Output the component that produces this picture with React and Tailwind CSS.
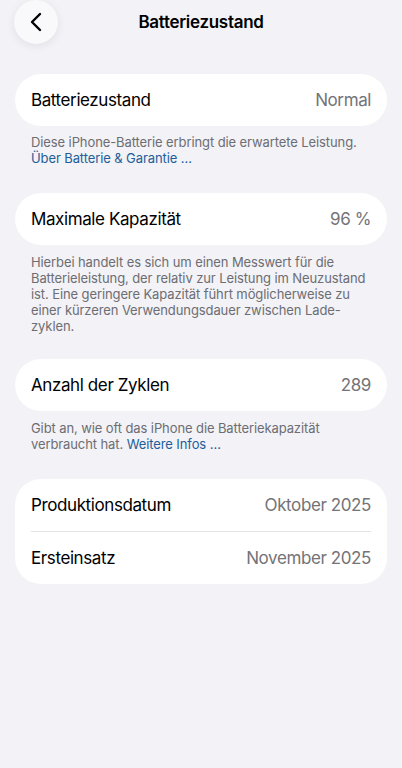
import React from "react";

const Row = ({ label, value }) => (
  <div className="flex h-[52px] items-center justify-between px-4 pt-[2px]">
    <span className="text-[17px] tracking-[-0.4px] text-black">{label}</span>
    <span className="text-[17px] tracking-[-0.4px] text-[#737378]">{value}</span>
  </div>
);

const Card = ({ children }) => (
  <div className="mx-[15px] overflow-hidden rounded-[26px] bg-white">{children}</div>
);

const Note = ({ children, className = "" }) => (
  <p
    className={`mx-[31px] whitespace-nowrap text-[13px] leading-[16px] tracking-[-0.1px] text-[#6d6d72] ${className}`}
  >
    {children}
  </p>
);

export default function App() {
  return (
    <div
      className="min-h-[768px] w-full bg-[#f2f2f7]"
      style={{ fontFamily: "Inter, 'Noto Sans', sans-serif" }}
    >
      {/* header */}
      <div className="relative flex h-[44px] items-center justify-center">
        <button className="absolute left-[14px] top-0 flex h-[44px] w-[44px] items-center justify-center rounded-full bg-[#f9f9fb] shadow-[0_2px_10px_rgba(0,0,0,0.08)]">
          <svg width="12" height="20" viewBox="0 0 12 20" fill="none">
            <path
              d="M10 2 L2 10 L10 18"
              stroke="#000"
              strokeWidth="2.4"
              strokeLinecap="round"
              strokeLinejoin="round"
            />
          </svg>
        </button>
        <h1 className="pt-[2px] text-[17px] font-semibold tracking-[-0.3px] text-black">
          Batteriezustand
        </h1>
      </div>

      <div className="mt-[30px]">
        <Card>
          <Row label="Batteriezustand" value="Normal" />
        </Card>
        <Note className="mb-[27px] mt-[8px]">
          Diese iPhone-Batterie erbringt die erwartete Leistung.
          <br />
          <span className="text-[#235e99]">Über Batterie &amp; Garantie …</span>
        </Note>

        <Card>
          <Row label="Maximale Kapazität" value="96 %" />
        </Card>
        <Note className="mb-[25px] mt-[9px]">
          Hierbei handelt es sich um einen Messwert für die
          <br />
          Batterieleistung, der relativ zur Leistung im Neuzustand
          <br />
          ist. Eine geringere Kapazität führt möglicherweise zu
          <br />
          einer kürzeren Verwendungsdauer zwischen Lade-
          <br />
          zyklen.
        </Note>

        <Card>
          <Row label="Anzahl der Zyklen" value="289" />
        </Card>
        <Note className="mb-[27px] mt-[9px]">
          Gibt an, wie oft das iPhone die Batteriekapazität
          <br />
          verbraucht hat. <span className="text-[#235e99]">Weitere Infos …</span>
        </Note>

        <Card>
          <Row label="Produktionsdatum" value="Oktober 2025" />
          <div className="mx-4 h-px bg-[#e3e3e8]" />
          <Row label="Ersteinsatz" value="November 2025" />
        </Card>
      </div>
    </div>
  );
}
